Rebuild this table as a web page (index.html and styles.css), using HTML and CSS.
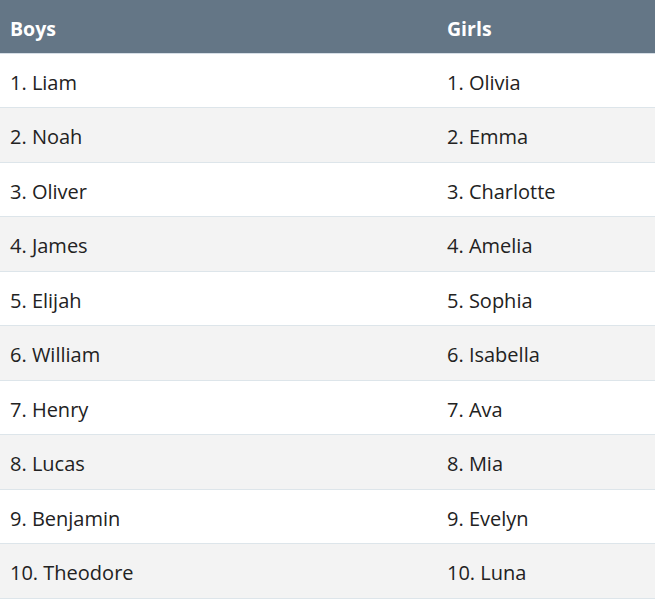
FILE: index.html
```html
<!DOCTYPE html>
<html>
<head>
<meta charset="utf-8">
<link rel="stylesheet" href="styles.css">
</head>
<body>
<table class="names">
  <thead>
    <tr><th>Boys</th><th>Girls</th></tr>
  </thead>
  <tbody>
    <tr><td>1. Liam</td><td>1. Olivia</td></tr>
    <tr><td>2. Noah</td><td>2. Emma</td></tr>
    <tr><td>3. Oliver</td><td>3. Charlotte</td></tr>
    <tr><td>4. James</td><td>4. Amelia</td></tr>
    <tr><td>5. Elijah</td><td>5. Sophia</td></tr>
    <tr><td>6. William</td><td>6. Isabella</td></tr>
    <tr><td>7. Henry</td><td>7. Ava</td></tr>
    <tr><td>8. Lucas</td><td>8. Mia</td></tr>
    <tr><td>9. Benjamin</td><td>9. Evelyn</td></tr>
    <tr><td>10. Theodore</td><td>10. Luna</td></tr>
  </tbody>
</table>
</body>
</html>
```

FILE: styles.css
```css
html, body {
  margin: 0;
  padding: 0;
  background: #ffffff;
}
.names {
  width: 655px;
  border-collapse: collapse;
  font-family: "Open Sans", "Noto Sans", sans-serif;
  font-size: 20px;
  color: #222222;
  table-layout: fixed;
}
.names th,
.names td {
  text-align: left;
  padding: 4px 10px 0;
  vertical-align: middle;
}
.names th:first-child,
.names td:first-child {
  width: 417px;
}
.names thead tr {
  height: 53px;
  background: #647686;
  border-bottom: 1px solid #d6dee6;
}
.names th {
  color: #ffffff;
  font-weight: 700;
  font-size: 19.5px;
  padding-top: 5px;
}
.names tbody tr {
  height: 54.5px;
  border-bottom: 1px solid #dde5ea;
}
.names tbody tr:nth-child(even) {
  background: #f3f3f3;
}
```
